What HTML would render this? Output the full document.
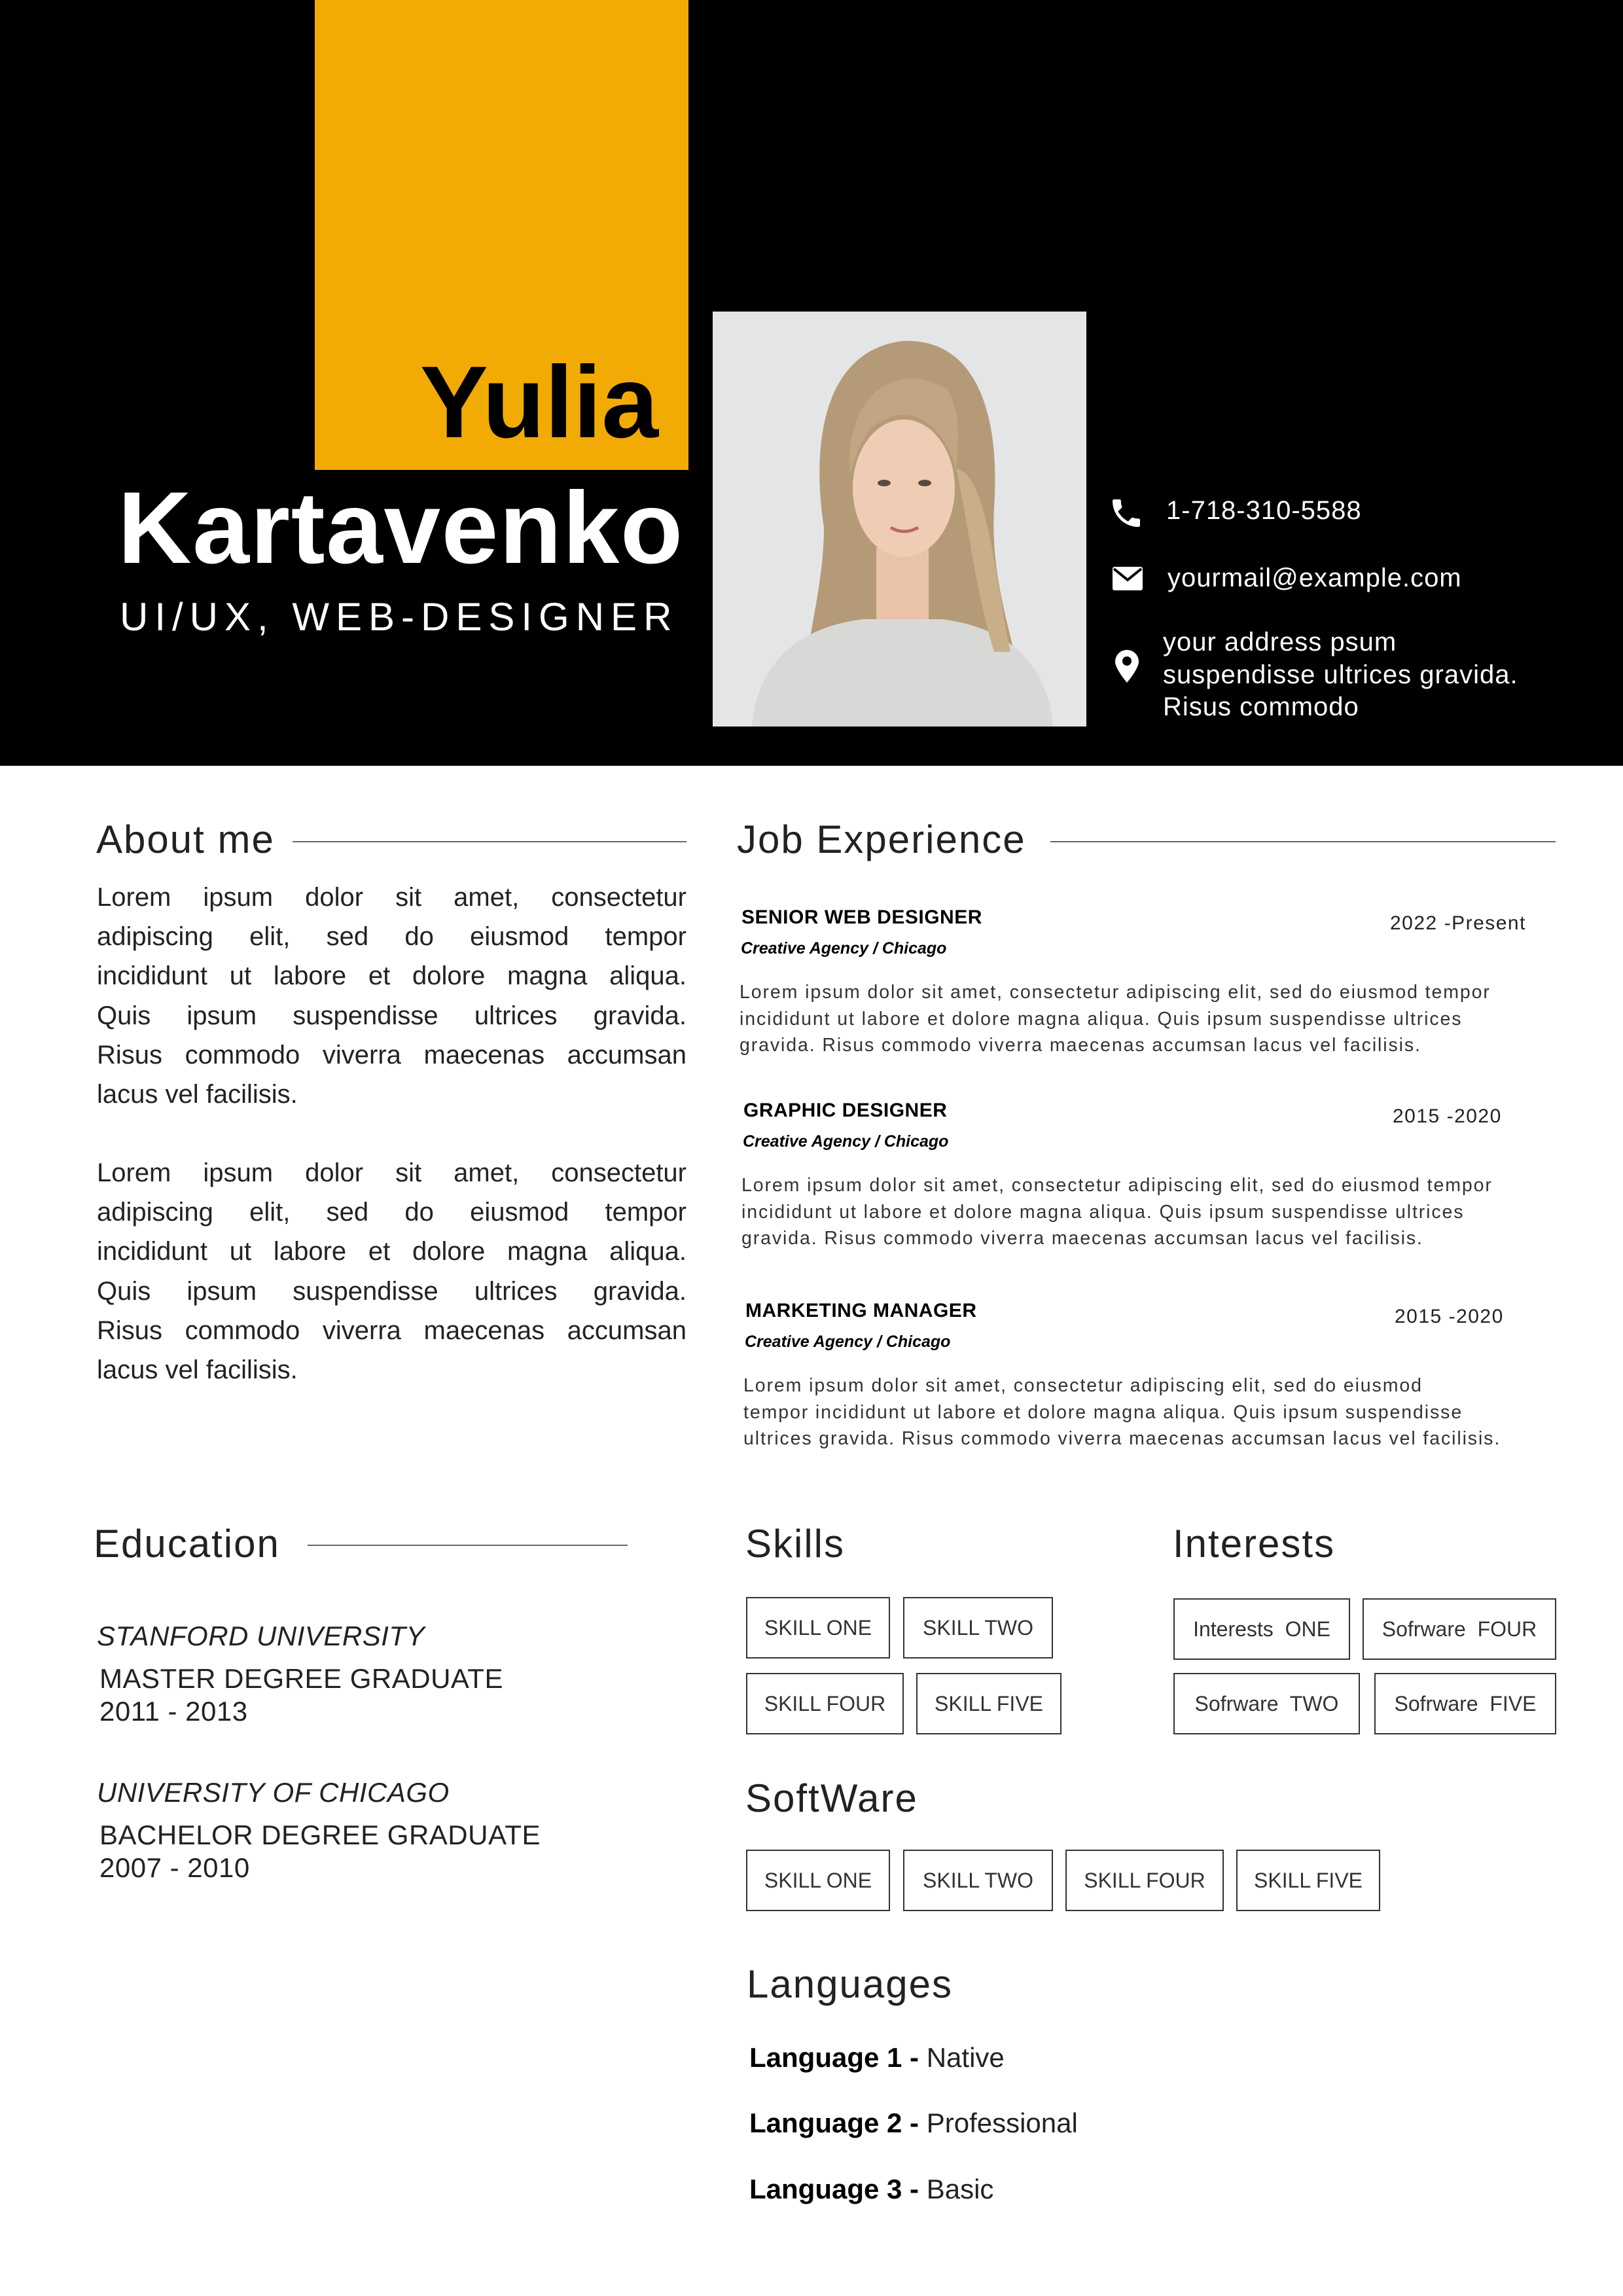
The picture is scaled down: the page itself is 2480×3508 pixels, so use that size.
<!DOCTYPE html>
<html><head><meta charset="utf-8"><style>
*{margin:0;padding:0;box-sizing:border-box}
body{width:2480px;height:3508px;position:relative;background:#fff;font-family:"Liberation Sans",sans-serif;color:#222;overflow:hidden}
.a{position:absolute;white-space:nowrap}
.hdr{position:absolute;left:0;top:0;width:2480px;height:1170px;background:#000}
.h2{font-size:60px;line-height:80px;color:#222;font-weight:normal;letter-spacing:2px}
.line{position:absolute;height:2px;background:#666}
.p{position:absolute;left:148px;width:901px;font-size:40px;line-height:60.2px;color:#222}
.p div{text-align:justify;text-align-last:justify;white-space:nowrap;height:60.2px}
.p div.l{text-align-last:left}
.jt{font-size:30px;font-weight:bold;line-height:40px;color:#000;letter-spacing:0.5px}
.js{font-size:25px;font-weight:bold;font-style:italic;line-height:40px;color:#000}
.jd{font-size:28.5px;line-height:40.5px;color:#333;letter-spacing:1.9px}
.dt{font-size:30px;line-height:40px;color:#222;letter-spacing:1.5px}
.box{position:absolute;border:2px solid #333;font-size:32px;color:#333;display:flex;align-items:center;justify-content:center;white-space:nowrap}
.ed{font-size:42px;line-height:50px;color:#222;letter-spacing:0.5px}
.lg{font-size:42px;line-height:60px;color:#222}
.lg b{color:#000}
.ct{font-size:40px;line-height:50px;color:#fff;letter-spacing:1px}
</style></head><body>
<div class="hdr"></div>
<div style="position:absolute;left:481px;top:0;width:571px;height:718px;background:#f2ab05"></div>
<div class="a" style="right:1474px;top:535px;font-size:156px;font-weight:bold;line-height:160px;color:#000;letter-spacing:0px">Yulia</div>
<div class="a" style="left:180px;top:727px;font-size:156px;font-weight:bold;line-height:160px;color:#fff;letter-spacing:1.5px">Kartavenko</div>
<div class="a" style="left:183px;top:908px;font-size:60px;line-height:70px;color:#fff;letter-spacing:10px">UI/UX, WEB-DESIGNER</div>

<svg style="position:absolute;left:1089px;top:476px" width="571" height="634" viewBox="0 0 571 634">
<rect width="571" height="634" fill="#e4e5e6"/>
<path d="M170 330 C150 200 170 60 290 45 C400 40 440 150 430 300 C425 400 450 470 470 560 L470 634 L150 634 C120 560 170 450 170 330Z" fill="#b59a78"/>
<path d="M60 634 C70 520 150 480 230 470 L350 470 C430 480 510 520 520 634Z" fill="#d8d8d6"/>
<path d="M250 360 L250 470 L330 470 L330 360Z" fill="#e8c3aa"/>
<ellipse cx="292" cy="270" rx="78" ry="105" fill="#efcdb5"/>
<path d="M210 250 C200 130 280 70 360 120 C380 160 375 200 372 240 C350 170 300 130 240 180 C225 200 215 230 210 250Z" fill="#c2a683"/>
<path d="M372 240 C390 320 400 420 430 520 L455 520 C430 400 420 250 372 240Z" fill="#c9ae8a"/>
<ellipse cx="262" cy="262" rx="10" ry="5" fill="#5a4a3d"/>
<ellipse cx="324" cy="262" rx="10" ry="5" fill="#5a4a3d"/>
<path d="M272 330 Q292 342 314 330" stroke="#b86a64" stroke-width="5" fill="none"/>
</svg>

<svg style="position:absolute;left:1693px;top:756px" width="56" height="56" viewBox="0 0 24 24"><path fill="#fff" d="M6.6 10.8c1.4 2.8 3.8 5.1 6.6 6.6l2.2-2.2c.3-.3.7-.4 1-.2 1.1.4 2.3.6 3.6.6.6 0 1 .4 1 1V20c0 .6-.4 1-1 1C10.6 21 3 13.4 3 4c0-.6.4-1 1-1h3.5c.6 0 1 .4 1 1 0 1.3.2 2.5.6 3.6.1.3 0 .7-.2 1L6.6 10.8z"/></svg>
<div class="a ct" style="left:1782px;top:755px">1-718-310-5588</div>
<svg style="position:absolute;left:1700px;top:866px" width="46" height="36" viewBox="0 0 46 36"><rect x="0" y="0" width="46" height="36" rx="3" fill="#fff"/><path d="M2 3 L23 20 L44 3" stroke="#000" stroke-width="4" fill="none"/></svg>
<div class="a ct" style="left:1784px;top:858px">yourmail@example.com</div>
<svg style="position:absolute;left:1704px;top:993px" width="36" height="50" viewBox="0 0 36 50"><path d="M18 0C8 0 0 8 0 18c0 11 18 32 18 32s18-21 18-32C36 8 28 0 18 0z" fill="#fff"/><circle cx="18" cy="17" r="7" fill="#000"/></svg>
<div class="a ct" style="left:1777px;top:957px;line-height:49.5px">your address psum<br>suspendisse ultrices gravida.<br>Risus commodo</div>

<div class="a h2" style="left:147px;top:1243px">About me</div>
<div class="line" style="left:447px;top:1285px;width:602px"></div>
<div class="p" style="top:1341px">
<div>Lorem ipsum dolor sit amet, consectetur</div>
<div>adipiscing elit, sed do eiusmod tempor</div>
<div>incididunt ut labore et dolore magna aliqua.</div>
<div>Quis ipsum suspendisse ultrices gravida.</div>
<div>Risus commodo viverra maecenas accumsan</div>
<div class="l">lacus vel facilisis.</div>
</div>
<div class="p" style="top:1762px">
<div>Lorem ipsum dolor sit amet, consectetur</div>
<div>adipiscing elit, sed do eiusmod tempor</div>
<div>incididunt ut labore et dolore magna aliqua.</div>
<div>Quis ipsum suspendisse ultrices gravida.</div>
<div>Risus commodo viverra maecenas accumsan</div>
<div class="l">lacus vel facilisis.</div>
</div>

<div class="a h2" style="left:1126px;top:1243px">Job Experience</div>
<div class="line" style="left:1605px;top:1285px;width:772px"></div>

<div class="a jt" style="left:1133px;top:1382px">SENIOR WEB DESIGNER</div>
<div class="a dt" style="left:2124px;top:1391px">2022 -Present</div>
<div class="a js" style="left:1132px;top:1429px">Creative Agency / Chicago</div>
<div class="a jd" style="left:1130px;top:1496px">Lorem ipsum dolor sit amet, consectetur adipiscing elit, sed do eiusmod tempor<br>incididunt ut labore et dolore magna aliqua. Quis ipsum suspendisse ultrices<br>gravida. Risus commodo viverra maecenas accumsan lacus vel facilisis.</div>

<div class="a jt" style="left:1136px;top:1677px">GRAPHIC DESIGNER</div>
<div class="a dt" style="left:2128px;top:1686px">2015 -2020</div>
<div class="a js" style="left:1135px;top:1724px">Creative Agency / Chicago</div>
<div class="a jd" style="left:1133px;top:1791px">Lorem ipsum dolor sit amet, consectetur adipiscing elit, sed do eiusmod tempor<br>incididunt ut labore et dolore magna aliqua. Quis ipsum suspendisse ultrices<br>gravida. Risus commodo viverra maecenas accumsan lacus vel facilisis.</div>

<div class="a jt" style="left:1139px;top:1983px">MARKETING MANAGER</div>
<div class="a dt" style="left:2131px;top:1992px">2015 -2020</div>
<div class="a js" style="left:1138px;top:2030px">Creative Agency / Chicago</div>
<div class="a jd" style="left:1136px;top:2097px">Lorem ipsum dolor sit amet, consectetur adipiscing elit, sed do eiusmod<br>tempor incididunt ut labore et dolore magna aliqua. Quis ipsum suspendisse<br>ultrices gravida. Risus commodo viverra maecenas accumsan lacus vel facilisis.</div>

<div class="a h2" style="left:143px;top:2319px">Education</div>
<div class="line" style="left:470px;top:2360px;width:489px"></div>
<div class="a ed" style="left:148px;top:2475px;font-style:italic">STANFORD UNIVERSITY</div>
<div class="a ed" style="left:152px;top:2540px">MASTER DEGREE GRADUATE<br>2011 - 2013</div>
<div class="a ed" style="left:148px;top:2714px;font-style:italic">UNIVERSITY OF CHICAGO</div>
<div class="a ed" style="left:152px;top:2779px">BACHELOR DEGREE GRADUATE<br>2007 - 2010</div>

<div class="a h2" style="left:1139px;top:2319px">Skills</div>
<div class="a h2" style="left:1792px;top:2319px">Interests</div>
<div class="box" style="left:1140px;top:2440px;width:220px;height:94px">SKILL ONE</div>
<div class="box" style="left:1380px;top:2440px;width:229px;height:94px">SKILL TWO</div>
<div class="box" style="left:1140px;top:2556px;width:241px;height:94px">SKILL FOUR</div>
<div class="box" style="left:1400px;top:2556px;width:222px;height:94px">SKILL FIVE</div>
<div class="box" style="left:1793px;top:2442px;width:270px;height:94px">Interests&nbsp; ONE</div>
<div class="box" style="left:2082px;top:2442px;width:296px;height:94px">Sofrware&nbsp; FOUR</div>
<div class="box" style="left:1793px;top:2556px;width:285px;height:94px">Sofrware&nbsp; TWO</div>
<div class="box" style="left:2100px;top:2556px;width:278px;height:94px">Sofrware&nbsp; FIVE</div>

<div class="a h2" style="left:1139px;top:2708px">SoftWare</div>
<div class="box" style="left:1140px;top:2826px;width:220px;height:94px">SKILL ONE</div>
<div class="box" style="left:1380px;top:2826px;width:229px;height:94px">SKILL TWO</div>
<div class="box" style="left:1628px;top:2826px;width:242px;height:94px">SKILL FOUR</div>
<div class="box" style="left:1889px;top:2826px;width:220px;height:94px">SKILL FIVE</div>

<div class="a h2" style="left:1141px;top:2992px">Languages</div>
<div class="a lg" style="left:1145px;top:3114px"><b>Language 1 -</b> Native</div>
<div class="a lg" style="left:1145px;top:3214px"><b>Language 2 -</b> Professional</div>
<div class="a lg" style="left:1145px;top:3315px"><b>Language 3 -</b> Basic</div>
</body></html>
